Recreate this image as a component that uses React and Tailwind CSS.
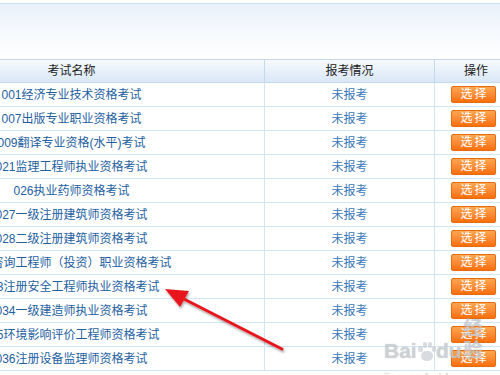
import React from 'react';

const exams = [
  '001经济专业技术资格考试',
  '007出版专业职业资格考试',
  '009翻译专业资格(水平)考试',
  '021监理工程师执业资格考试',
  '026执业药师资格考试',
  '027一级注册建筑师资格考试',
  '028二级注册建筑师资格考试',
  '031咨询工程师（投资）职业资格考试',
  '033注册安全工程师执业资格考试',
  '034一级建造师执业资格考试',
  '035环境影响评价工程师资格考试',
  '036注册设备监理师资格考试',
];

function PickButton() {
  return (
    <button className="w-[45px] h-[17px] rounded-[2px] border border-[#e86a0c] bg-gradient-to-b from-[#ffa650] to-[#f56f06] text-white text-[12px] leading-[15px] tracking-[2px] pl-[2px]">
      选择
    </button>
  );
}

// red pointer arrow drawn over the table
function Arrow() {
  return (
    <svg className="absolute left-0 top-0 pointer-events-none" width="500" height="375">
      <defs>
        <filter id="sh" x="-20%" y="-20%" width="140%" height="140%">
          <feDropShadow dx="1" dy="2" stdDeviation="1.2" floodColor="#000" floodOpacity="0.35" />
        </filter>
      </defs>
      <g filter="url(#sh)">
        <line x1="282" y1="349" x2="182" y2="298" stroke="#e8161b" strokeWidth="3" strokeLinecap="round" />
        <polygon points="165,289 180,307 189,291" fill="#e8161b" />
      </g>
    </svg>
  );
}

function Watermark() {
  return (
    <div
      className="absolute left-[384px] top-[318px] flex flex-col items-start text-[#d4d8dc]/70 pointer-events-none"
      style={{ textShadow: '0 0 1px rgba(120,130,140,0.5)' }}
    >
      <div className="flex items-end text-[21px] font-bold leading-[22px]" style={{ fontFamily: '"Liberation Sans", "Noto Sans CJK SC", sans-serif' }}>
        <span>Bai</span>
        <span className="relative w-[18px] h-[20px] mx-[1px] opacity-70">
          <span className="absolute left-[3px] top-[9px] w-[12px] h-[10px] rounded-full bg-[#c8cdd2]" />
          <span className="absolute left-[0px] top-[4px] w-[5px] h-[6px] rounded-full bg-[#c8cdd2]" />
          <span className="absolute left-[5px] top-[0px] w-[4px] h-[6px] rounded-full bg-[#c8cdd2]" />
          <span className="absolute left-[10px] top-[0px] w-[4px] h-[6px] rounded-full bg-[#c8cdd2]" />
          <span className="absolute left-[14px] top-[4px] w-[4px] h-[6px] rounded-full bg-[#c8cdd2]" />
        </span>
        <span>du</span>
        <span className="ml-[2px] text-[19px]">经验</span>
      </div>
      <div className="text-[12px] leading-[14px] mt-[9px]" style={{ fontFamily: '"Liberation Sans", sans-serif' }}>
        jingyan.baidu.com
      </div>
    </div>
  );
}

export default function App() {
  return (
    <div
      className="relative w-[500px] h-[375px] overflow-hidden bg-white text-[12px]"
      style={{ fontFamily: '"Liberation Sans", "Noto Sans CJK SC", sans-serif' }}
    >
      {/* top strip */}
      <div className="h-[3px] bg-white" />
      <div className="h-[56px] border-t border-[#cadcef] bg-gradient-to-b from-[#e8f0fa] via-[#f6f9fd] to-white" />

      {/* table */}
      <div className="ml-[-121px] w-[638px]">
        <div className="flex h-[24px] border-y border-[#c4d8ed] bg-gradient-to-b from-[#f7fafe] to-[#d9e7f6] text-[#222]">
          <div className="w-[386px] border-r border-[#c4d8ed] flex items-center justify-center">考试名称</div>
          <div className="w-[170px] border-r border-[#c4d8ed] flex items-center justify-center">报考情况</div>
          <div className="w-[82px] flex items-center justify-center">操作</div>
        </div>
        {exams.map((name) => (
          <div key={name} className="flex h-[24px] border-b border-[#d3e4f4]">
            <div className="w-[386px] border-r border-[#d3e4f4] flex items-center justify-center text-[#24609f] whitespace-nowrap">
              {name}
            </div>
            <div className="w-[170px] border-r border-[#d3e4f4] flex items-center justify-center text-[#3a78b8]">
              未报考
            </div>
            <div className="w-[82px] flex items-center pl-[16px]">
              <PickButton />
            </div>
          </div>
        ))}
      </div>

      <Watermark />
      <Arrow />
    </div>
  );
}
